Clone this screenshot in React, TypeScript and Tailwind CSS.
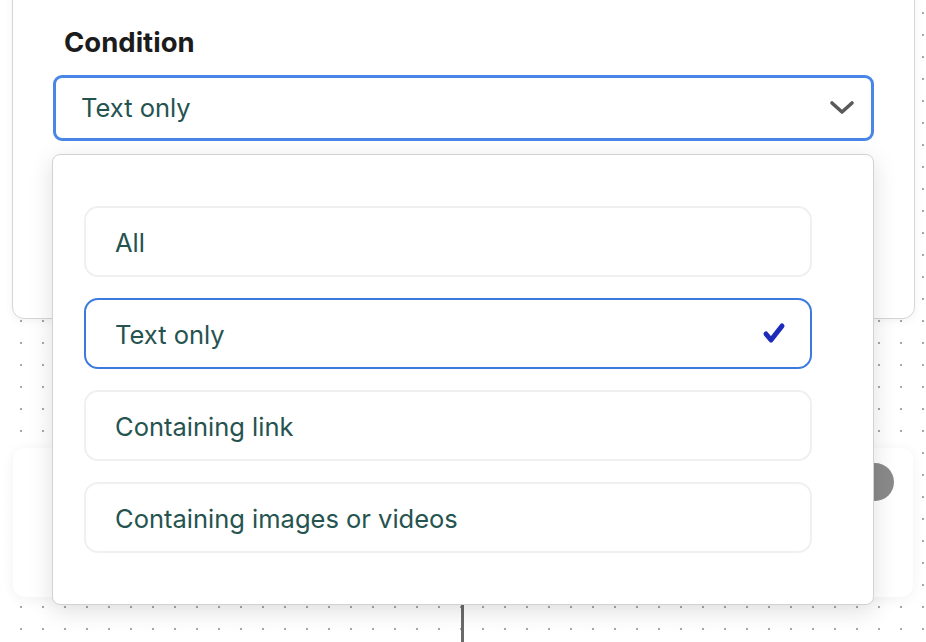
import React from "react";

const options = ["All", "Text only", "Containing link", "Containing images or videos"];

function Check() {
  return (
    <svg width="26" height="26" viewBox="0 0 26 26" className="shrink-0">
      <path d="M5 13 L10 19 L21 5" fill="none" stroke="#1c2cb8" strokeWidth="5" strokeLinecap="round" strokeLinejoin="round" />
    </svg>
  );
}

function Chevron() {
  return (
    <svg width="26" height="16" viewBox="0 0 26 16">
      <path d="M3 3 L13 12 L23 3" fill="none" stroke="#5a5a5a" strokeWidth="3.6" strokeLinecap="round" strokeLinejoin="round" />
    </svg>
  );
}

export default function App() {
  const selected = "Text only";

  return (
    <div
      className="relative w-[926px] h-[642px] overflow-hidden bg-white font-['Inter',sans-serif] bg-[radial-gradient(circle,#a8a8a8_1px,transparent_1.6px)] bg-[length:22px_22px] bg-[position:10px_2px]"
    >
      {/* node card behind */}
      <div className="absolute left-[12px] top-[-40px] w-[903px] h-[359px] rounded-[12px] border border-[#d6d6d6] bg-white shadow-[0_2px_10px_rgba(0,0,0,0.05)]">
        <div className="pt-[64px] pl-[40px] pr-[40px]">
          <div className="pl-[11px] text-[27.5px] font-bold text-[#1c1c1c] leading-[34px]">Condition</div>
          <div className="mt-[16px] h-[66px] rounded-[9px] border-[3px] border-[#4a86e8] flex items-center justify-between pl-[25px] pr-[16px]">
            <span className="text-[25.5px] text-[#25534f]">{selected}</span>
            <Chevron />
          </div>
        </div>
      </div>

      {/* second node */}
      <div className="absolute left-[13px] top-[448px] w-[900px] h-[149px] rounded-[12px] bg-white shadow-[0_2px_14px_rgba(0,0,0,0.06)]">
        <div className="absolute right-[19px] top-[15px] w-[38px] h-[38px] rounded-full bg-[#8a8a8a]" />
      </div>

      {/* edge */}
      <div className="absolute left-[461px] top-[597px] w-[3px] h-[50px] bg-[#6a6a6a]" />

      {/* dropdown menu */}
      <div className="absolute left-[52px] top-[154px] w-[822px] h-[451px] rounded-[8px] border border-[#d2d2d2] bg-white shadow-[0_6px_24px_rgba(0,0,0,0.13)] pt-[51px] pl-[31px] pr-[61px]">
        <div className="flex flex-col gap-[21px]">
          {options.map((o) =>
            o === selected ? (
              <div
                key={o}
                className="h-[71px] rounded-[14px] border-2 border-[#3d7ae0] flex items-center justify-between pl-[29px] pr-[23px]"
              >
                <span className="pt-[3px] text-[25.5px] text-[#25534f]">{o}</span>
                <Check />
              </div>
            ) : (
              <div
                key={o}
                className="h-[71px] rounded-[14px] border-2 border-[#f0f0f0] flex items-center pl-[29px]"
              >
                <span className="pt-[3px] text-[25.5px] text-[#25534f]">{o}</span>
              </div>
            )
          )}
        </div>
      </div>
    </div>
  );
}
